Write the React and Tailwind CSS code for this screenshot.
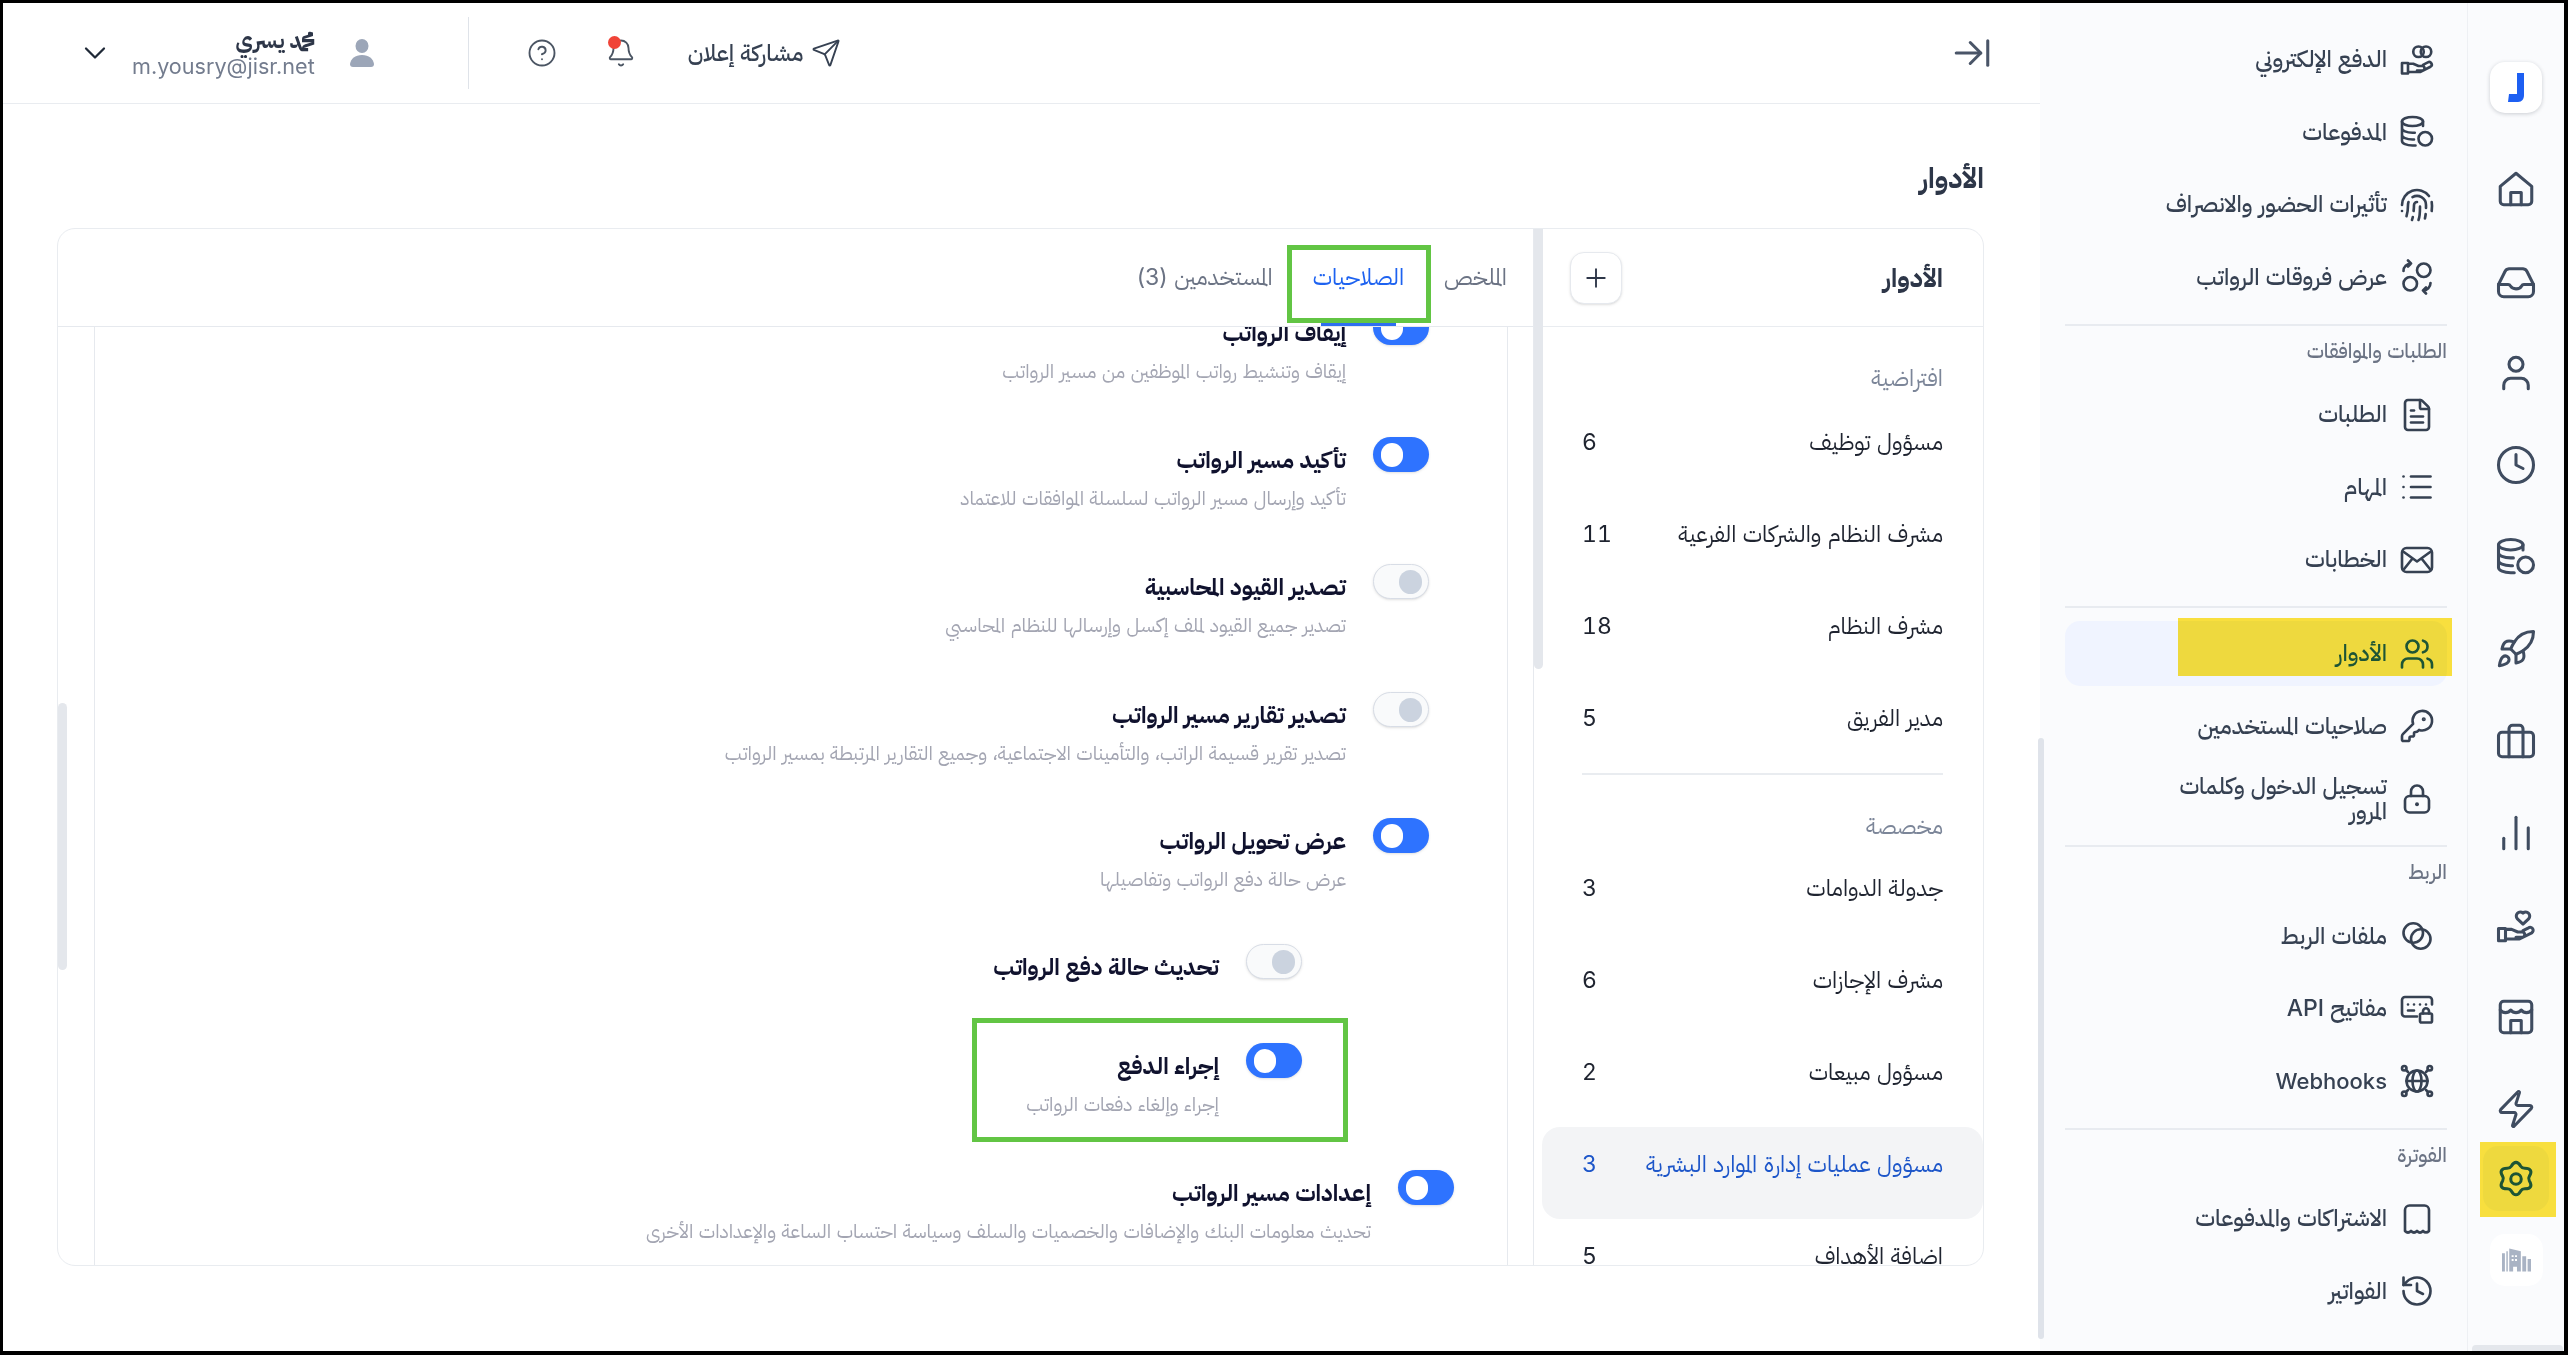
import {
  ArrowRightToLine, Bell, ChartNoAxesColumn, ChevronDown, CircleHelp, Clock, FileText, Fingerprint,
  History, KeyRound, List, Plus, Rocket, Send, User, Users, Zap,
} from 'lucide-react';

const Svg = ({ className, children }) => (
  <svg viewBox="0 0 24 24" fill="none" stroke="currentColor" strokeWidth="1.75" strokeLinecap="round" strokeLinejoin="round" className={className}>
    {children}
  </svg>
);

const Home = ({ className }) => (
  <Svg className={className}>
    <path d="M3 10.500 12 3l9 7.500V19a2 2 0 0 1-2 2H5a2 2 0 0 1-2-2z" />
    <path d="M9 21v-7h6v7" />
  </Svg>
);
const Tray = ({ className }) => (
  <Svg className={className}>
    <path d="M2 14v4a3 3 0 0 0 3 3h14a3 3 0 0 0 3-3v-4" />
    <path d="M2 14l3.500-7A3 3 0 0 1 8 5h8a3 3 0 0 1 2.500 2l3.500 7" />
    <path d="M2 14h5.500a1.500 1.500 0 0 1 1.300.8c.6 1.100 1.700 1.700 3.200 1.700s2.600-.6 3.200-1.700a1.500 1.500 0 0 1 1.300-.8H22" />
  </Svg>
);
const CoinsStack = ({ className }) => (
  <Svg className={className}>
    <ellipse cx="9" cy="5" rx="7" ry="3" />
    <path d="M2 5v13c0 1.600 3 3 7 3h2M16 8V5M2 9.500c0 1.600 3 3 7 3h1.500M2 14c0 1.600 3 3 7 3h1" />
    <circle cx="17.500" cy="16.500" r="4.500" />
  </Svg>
);
const Briefcase = ({ className }) => (
  <Svg className={className}>
    <rect x="2" y="7" width="20" height="14" rx="2" />
    <path d="M8 7V5a2 2 0 0 1 2-2h4a2 2 0 0 1 2 2v2M8 7v14M16 7v14" />
  </Svg>
);
const handPaths = 'M2 14h4v7H2zM6 14.500h3.500l3.500 1.500h2.500a1.500 1.500 0 0 1 0 3H12M6 20h8l7-3.500a1.700 1.700 0 0 0-1.800-2.900L16 15.200';
const HandHeart = ({ className }) => (
  <Svg className={className}>
    <path d={handPaths} />
    <path d="M16 11.500l-3.200-3a2.300 2.300 0 0 1 3.200-3.300 2.300 2.300 0 0 1 3.200 3.300z" />
  </Svg>
);
const HandCoins = ({ className }) => (
  <Svg className={className}>
    <path d={handPaths} />
    <circle cx="13" cy="6.500" r="3.500" />
    <circle cx="18" cy="6.500" r="3.500" />
  </Svg>
);
const Shop = ({ className }) => (
  <Svg className={className}>
    <rect x="3" y="3" width="18" height="18" rx="2" />
    <path d="M3 8c1.500 2 4.500 2 6 0 1.500 2 4.500 2 6 0 1.500 2 4.500 2 6 0" />
    <path d="M9 21v-7h6v7" />
  </Svg>
);
const Padlock = ({ className }) => (
  <Svg className={className}>
    <rect x="4" y="10" width="16" height="11" rx="3" />
    <path d="M8 10V7a4 4 0 0 1 8 0v3" />
    <path d="M12 15.500h.01" strokeWidth="2.600" />
  </Svg>
);
const Envelope = ({ className }) => (
  <Svg className={className}>
    <rect x="2" y="4" width="20" height="16" rx="3" />
    <path d="M3 6.500l9 6.500 9-6.500M3 18.500l6-7.500M21 18.500l-6-7.500" />
  </Svg>
);
const SwapCircles = ({ className }) => (
  <Svg className={className}>
    <circle cx="7.500" cy="16.500" r="4.500" />
    <circle cx="16.500" cy="7.500" r="4.500" />
    <path d="M3 8a5 5 0 0 1 5-5M6 1l2 2-2 2M21 16a5 5 0 0 1-5 5M18 23l-2-2 2-2" />
  </Svg>
);
const LinkedCircles = ({ className }) => (
  <Svg className={className}>
    <circle cx="9.500" cy="10" r="6.500" />
    <circle cx="14.500" cy="14" r="6.500" />
  </Svg>
);
const KeyboardLock = ({ className }) => (
  <Svg className={className}>
    <path d="M12 17H4a2 2 0 0 1-2-2V6a2 2 0 0 1 2-2h16a2 2 0 0 1 2 2v3" />
    <path d="M6 9h.01M10 9h.01M14 9h.01M18 9h.01M6 13h4" />
    <rect x="14" y="15" width="8" height="6" rx="1" />
    <path d="M16 15v-1.500a2 2 0 0 1 4 0V15" />
  </Svg>
);
const WebhookGlobe = ({ className }) => (
  <Svg className={className}>
    <circle cx="12" cy="12" r="7" />
    <ellipse cx="12" cy="12" rx="3" ry="7" />
    <path d="M5 12h14M6 6 4.500 4.500M18 6l1.500-1.500M6 18l-1.500 1.500M18 18l1.500 1.500" />
    <circle cx="3.500" cy="3.500" r="1.500" />
    <circle cx="20.500" cy="3.500" r="1.500" />
    <circle cx="3.500" cy="20.500" r="1.500" />
    <circle cx="20.500" cy="20.500" r="1.500" />
  </Svg>
);
const Receipt = ({ className }) => (
  <Svg className={className}>
    <path d="M4 20V6a3 3 0 0 1 3-3h10a3 3 0 0 1 3 3v14c-1.300 1.300-2.700 1.300-4 0-1.300 1.300-2.700 1.300-4 0-1.300 1.300-2.700 1.300-4 0-1.300 1.300-2.700 1.300-4 0Z" />
  </Svg>
);
const Gear = ({ className }) => (
  <Svg className={className}>
    <path d="M12 2.500c1.300 0 2 1 2.700 2.200.5.800 1.300 1.200 2.300 1.200 1.400 0 2.700.1 3.300 1.200.6 1.100 0 2.300-.7 3.400-.5.800-.5 1.600 0 2.500.7 1.100 1.300 2.300.7 3.400-.6 1.100-1.900 1.200-3.300 1.200-1 0-1.800.4-2.300 1.200-.7 1.200-1.400 2.200-2.700 2.200s-2-1-2.700-2.200c-.5-.8-1.300-1.200-2.300-1.200-1.400 0-2.700-.1-3.300-1.200-.6-1.100 0-2.300.7-3.400.5-.9.500-1.700 0-2.500-.7-1.100-1.300-2.300-.7-3.400.6-1.100 1.900-1.200 3.300-1.200 1 0 1.800-.4 2.300-1.200.7-1.200 1.400-2.200 2.700-2.200Z" />
    <circle cx="12" cy="12" r="3" />
  </Svg>
);
const Building = ({ className }) => (
  <svg viewBox="0 0 30 24" fill="currentColor" className={className}>
    <path d="M0 5h3v19H0zM4.500 3h1.500v21H4.500zM7.500 0l12 3v21h-4v-5h-4v5h-4zM21 8h4v16h-4zM26.500 11H30v13h-3.500z" />
    <path fill="#fff" d="M10 7h2v2h-2zM13.500 7h2v2h-2zM10 11h2v2h-2zM13.500 11h2v2h-2z" />
  </svg>
);
const Person = ({ className }) => (
  <svg viewBox="0 0 26 28" fill="currentColor" className={className}>
    <ellipse cx="13" cy="7" rx="6.500" ry="7" />
    <path d="M4 28a3 3 0 0 1-3-3c1-5.500 5-9 12-9s11 3.500 12 9a3 3 0 0 1-3 3z" />
  </svg>
);

const RAIL = [Home, Tray, User, Clock, CoinsStack, Rocket, Briefcase, ChartNoAxesColumn, HandHeart, Shop, Zap];

const NAV = [
  {
    items: [
      { icon: HandCoins, text: 'الدفع الإلكتروني' },
      { icon: CoinsStack, text: 'المدفوعات' },
      { icon: Fingerprint, text: 'تأثيرات الحضور والانصراف' },
      { icon: SwapCircles, text: 'عرض فروقات الرواتب' },
    ],
  },
  {
    label: 'الطلبات والموافقات',
    items: [
      { icon: FileText, text: 'الطلبات' },
      { icon: List, text: 'المهام' },
      { icon: Envelope, text: 'الخطابات' },
    ],
  },
  {
    items: [
      { icon: Users, text: 'الأدوار', active: true },
      { icon: KeyRound, text: 'صلاحيات المستخدمين' },
      { icon: Padlock, text: 'تسجيل الدخول وكلمات المرور' },
    ],
  },
  {
    label: 'الربط',
    items: [
      { icon: LinkedCircles, text: 'ملفات الربط' },
      { icon: KeyboardLock, text: 'مفاتيح API' },
      { icon: WebhookGlobe, text: 'Webhooks', size: 'text-[22px]' },
    ],
  },
  {
    label: 'الفوترة',
    items: [
      { icon: Receipt, text: 'الاشتراكات والمدفوعات' },
      { icon: History, text: 'الفواتير' },
    ],
  },
];

const ROLES_DEFAULT = [
  { name: 'مسؤول توظيف', count: 6 },
  { name: 'مشرف النظام والشركات الفرعية', count: 11 },
  { name: 'مشرف النظام', count: 18 },
  { name: 'مدير الفريق', count: 5 },
];
const ROLES_CUSTOM = [
  { name: 'جدولة الدوامات', count: 3 },
  { name: 'مشرف الإجازات', count: 6 },
  { name: 'مسؤول مبيعات', count: 2 },
  { name: 'مسؤول عمليات إدارة الموارد البشرية', count: 3, active: true },
  { name: 'إضافة الأهداف', count: 5 },
];

const PERMISSIONS = [
  { title: 'إيقاف الرواتب', desc: 'إيقاف وتنشيط رواتب الموظفين من مسير الرواتب', on: true, row: 'h-[127px] mr-[78px]' },
  { title: 'تأكيد مسير الرواتب', desc: 'تأكيد وإرسال مسير الرواتب لسلسلة الموافقات للاعتماد', on: true, row: 'h-[127px] mr-[78px]' },
  { title: 'تصدير القيود المحاسبية', desc: 'تصدير جميع القيود لملف إكسل وإرسالها للنظام المحاسبي', on: false, row: 'h-[128px] mr-[78px]' },
  { title: 'تصدير تقارير مسير الرواتب', desc: 'تصدير تقرير قسيمة الراتب، والتأمينات الاجتماعية، وجميع التقارير المرتبطة بمسير الرواتب', on: false, row: 'h-[126px] mr-[78px]' },
  { title: 'عرض تحويل الرواتب', desc: 'عرض حالة دفع الرواتب وتفاصيلها', on: true, row: 'h-[126px] mr-[78px]' },
  { title: 'تحديث حالة دفع الرواتب', on: false, row: 'h-[99px] mr-[205px]' },
  { title: 'إجراء الدفع', desc: 'إجراء وإلغاء دفعات الرواتب', on: true, row: 'h-[127px] mr-[205px]' },
  { title: 'إعدادات مسير الرواتب', desc: 'تحديث معلومات البنك والإضافات والخصميات والسلف وسياسة احتساب الساعة والإعدادات الأخرى', on: true, row: 'h-[127px] mr-[53px]' },
];

function Toggle({ on }) {
  return on ? (
    <span className="flex h-[35px] w-[56px] shrink-0 items-center rounded-full bg-[#2e73ff] pl-[8px] shadow-sm" dir="ltr">
      <span className="h-[24px] w-[22px] rounded-full bg-white" />
    </span>
  ) : (
    <span className="flex h-[35px] w-[56px] shrink-0 items-center justify-end rounded-full border border-[#d8dde6] bg-[#f9fafb] pr-[6px] shadow-sm" dir="ltr">
      <span className="h-[24px] w-[23px] rounded-full bg-[#cbd3df]" />
    </span>
  );
}

function NavItem({ icon: Icon, text, active, size = 'text-[23px]' }) {
  return (
    <div className={`flex h-[65px] items-center gap-[12px] rounded-[15px] px-[12px] ${active ? 'bg-[#f0f4ff] text-[#1d5fd8]' : 'text-[#364152]'}`}>
      <Icon className="h-[36px] w-[36px] shrink-0" strokeWidth={1.75} />
      <span className={`max-w-[232px] leading-[25px] font-medium ${size}`}>{text}</span>
    </div>
  );
}

function RoleRow({ name, count, active }) {
  return (
    <div className={`-mx-[40px] flex h-[92px] items-center justify-between rounded-[18px] px-[40px] pb-[18px] text-[23px] ${active ? 'bg-[#f3f4f6] text-[#1d56c9]' : 'text-[#1f2430]'}`}>
      <span>{name}</span>
      <span className="tabular-nums">{count}</span>
    </div>
  );
}

export default function App() {
  return (
    <div dir="rtl" className="relative flex h-screen w-full overflow-hidden border-t-[3px] border-r-4 border-b-4 border-l-[3px] border-black bg-white [font-variant-ligatures:common-ligatures_discretionary-ligatures]" style={{ fontFamily: 'Inter, "IBM Plex Sans Arabic", sans-serif' }}>

      {/* icon rail */}
      <aside className="relative flex w-[97px] shrink-0 flex-col items-center border-l border-[#eef0f4] bg-[#fafbfd] pt-[59px] text-[#3f4c60]">
        <div className="flex h-[51px] w-[52px] items-center justify-center rounded-[15px] bg-white shadow-[0_1px_4px_rgba(16,24,40,0.2)]">
          <svg viewBox="0 0 16 29" className="h-[29px] w-[16px]" fill="#1d5ff2">
            <path d="M9 0h7v22c0 4-2 7-6 7H0l1-8h8z" />
          </svg>
        </div>
        <div className="mt-[30px] flex flex-col items-center">
          {RAIL.map((Icon, i) => (
            <div key={i} className="flex h-[92px] w-[60px] items-center justify-center">
              <Icon className="h-[42px] w-[42px]" strokeWidth={1.75} />
            </div>
          ))}
        </div>
        <div className="-mt-[9px] flex h-[65px] w-[66px] items-center justify-center rounded-[15px] bg-[#f0f4ff] text-[#1d5fd8]">
          <Gear className="h-[42px] w-[42px]" />
        </div>
        <div className="mt-[23px] flex h-[52px] w-[53px] items-center justify-center rounded-[15px] bg-white text-[#a9b3c4]">
          <Building className="h-[28px] w-[29px]" />
        </div>
      </aside>

      {/* secondary nav */}
      <nav className="flex w-[427px] shrink-0 flex-col bg-[#fafbfd] pt-[24px] pr-[20px] pl-[25px]">
        {NAV.map((section, s) => (
          <div key={s} className={s > 0 ? 'mt-[14px] border-t-2 border-[#e8ebf0] pt-[13px]' : ''}>
            {section.label && <div className="mb-[7.5px] h-[36px] text-[20px] leading-[24px] font-medium text-[#6b7384]">{section.label}</div>}
            <div className="flex flex-col gap-[7.5px]">
              {section.items.map((item) => <NavItem key={item.text} {...item} />)}
            </div>
          </div>
        ))}
      </nav>

      {/* main */}
      <main className="flex min-w-0 flex-1 flex-col bg-white">
        <header className="flex h-[101px] shrink-0 items-center justify-between border-b border-[#e9ecf0] pr-[47px] pl-[74px]">
          <ArrowRightToLine className="h-[42px] w-[42px] text-[#4a5568]" strokeWidth={1.75} />
          <div className="flex items-center">
            <div className="flex items-center gap-[8px] text-[#364152]">
              <Send className="h-[30px] w-[30px]" strokeWidth={1.5} />
              <span className="text-[23px] font-medium">مشاركة إعلان</span>
            </div>
            <div className="relative mr-[52px] text-[#4b5563]">
              <Bell className="h-[30px] w-[30px]" strokeWidth={1.5} />
              <span className="absolute -top-[2px] left-[2px] h-[13px] w-[13px] rounded-full bg-[#f04438]" />
            </div>
            <CircleHelp className="mr-[49px] h-[30px] w-[30px] text-[#4b5563]" strokeWidth={1.5} />
            <div className="mr-[58px] ml-[93px] h-[72px] w-px bg-[#dfe3e9]" />
            <Person className="h-[28px] w-[26px] text-[#9ca6b8]" />
            <div className="mr-[34px] flex flex-col items-start">
              <span className="text-[22px] leading-[26px] font-bold text-[#2d3648]">محمد يسري</span>
              <span dir="ltr" className="text-[21.600px] leading-[26px] text-[#737c8e]">m.yousry@jisr.net</span>
            </div>
            <ChevronDown className="mr-[19px] h-[36px] w-[36px] text-[#1f2937]" strokeWidth={1.5} />
          </div>
        </header>

        <div className="flex min-h-0 flex-1 flex-col pr-[56px] pl-[54px]">
          <h1 className="flex h-[124px] shrink-0 items-center pt-[24px] text-[28px] font-bold text-[#2d3648]">الأدوار</h1>

          <section className="flex h-[1038px] shrink-0 overflow-hidden rounded-[18px] border border-[#e9ecf0]">
            {/* roles list */}
            <div className="relative w-[450px] shrink-0 overflow-hidden border-l border-[#e6e9ee]">
              <div className="absolute top-0 left-0 h-[440px] w-[9px] rounded-b-[5px] bg-[#e4e7ec]" />
              <div className="flex h-[98px] items-center justify-between border-b border-[#e9ecf0] pr-[40px] pl-[36px]">
                <span className="text-[26px] font-bold text-[#2d3648]">الأدوار</span>
                <button className="flex h-[52px] w-[52px] items-center justify-center rounded-[14px] border border-[#e6e9ee] bg-white shadow-sm">
                  <Plus className="h-[30px] w-[30px] text-[#2d3648]" strokeWidth={1.5} />
                </button>
              </div>
              <div className="pr-[40px] pl-[48px]">
                <div className="flex h-[78px] items-end pb-[13px] text-[23px] leading-[28px] text-[#7c8699]">افتراضية</div>
                {ROLES_DEFAULT.map((r) => <RoleRow key={r.name} {...r} />)}
                <div className="border-t-2 border-[#e9ecf0]" />
                <div className="flex h-[76px] items-end pb-[11px] text-[23px] leading-[28px] text-[#7c8699]">مخصصة</div>
                {ROLES_CUSTOM.map((r) => <RoleRow key={r.name} {...r} />)}
              </div>
            </div>

            {/* role details */}
            <div className="relative flex min-w-0 flex-1 flex-col overflow-hidden">
              <div className="absolute bottom-[295px] left-0 h-[267px] w-[9px] rounded-[5px] bg-[#e4e7ec]" />
              <div className="flex h-[98px] shrink-0 items-center gap-[40px] border-b border-[#e6e9ee] pr-[26px] text-[23px] text-[#6b7384]">
                <span>الملخص</span>
                <span className="relative flex h-full items-center text-[#1d62f0]">
                  الصلاحيات
                  <span className="absolute right-[8px] bottom-0 left-[8px] h-[3px] bg-[#2e6ff0]" />
                </span>
                <span>المستخدمين (3)</span>
              </div>
              <div className="mr-[25px] ml-[36px] min-h-0 flex-1 overflow-hidden border-r border-l border-[#e6e9ee]">
                <div className="-mt-[17px]">
                  {PERMISSIONS.map((p) => (
                    <div key={p.title} className={`flex items-start gap-[27px] ${p.row}`}>
                      <Toggle on={p.on} />
                      <div className="pt-[9px]">
                        <div className="text-[23px] leading-[28px] font-bold text-[#10122e]">{p.title}</div>
                        {p.desc && <div className="mt-[10px] text-[19.500px] leading-[28px] text-[#a3a5b2]">{p.desc}</div>}
                      </div>
                    </div>
                  ))}
                </div>
              </div>
            </div>
          </section>
        </div>
      </main>

      {/* sidebar scrollbars */}
      <div className="absolute top-[735px] right-[520px] h-[601px] w-[6px] rounded-[3px] bg-[#dfe3ea]" />
      <div className="absolute right-[1px] bottom-0 h-[6px] w-[91px] rounded-t-[4px] bg-[#e4e7ec]" />

      {/* tutorial highlights drawn over the screenshot */}
      <div className="absolute top-[615px] left-[2175px] h-[58px] w-[274px] bg-[#fde33e] mix-blend-multiply" />
      <div className="absolute top-[1139px] left-[2477px] h-[75px] w-[76px] bg-[#fde33e] mix-blend-multiply" />
      <div className="absolute top-[242px] left-[1284px] h-[78px] w-[144px] border-[5px] border-[#62c544]" />
      <div className="absolute top-[1015px] left-[969px] h-[124px] w-[376px] border-[5px] border-[#62c544]" />
    </div>
  );
}
